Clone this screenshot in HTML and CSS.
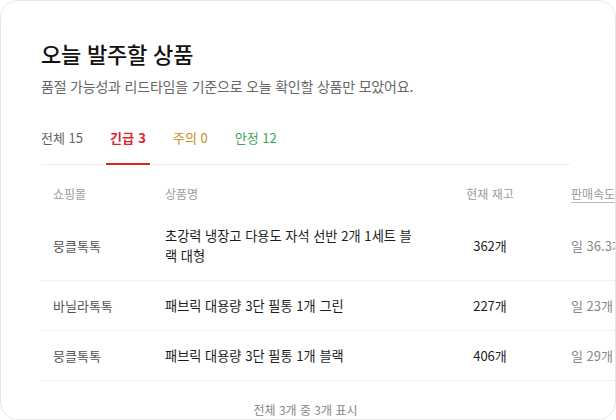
FILE: index.html
```html
<!DOCTYPE html>
<html lang="ko">
<head>
<meta charset="utf-8">
<title>오늘 발주할 상품</title>
<link rel="stylesheet" href="styles.css">
</head>
<body>
<section class="card">
  <h1 class="title">오늘 발주할 상품</h1>
  <p class="subtitle">품절 가능성과 리드타임을 기준으로 오늘 확인할 상품만 모았어요.</p>

  <nav class="tabs">
    <span class="tab tab-all">전체 15</span>
    <span class="tab tab-urgent is-active">긴급 3</span>
    <span class="tab tab-warn">주의 0</span>
    <span class="tab tab-safe">안정 12</span>
  </nav>

  <div class="table-wrap">
    <table class="orders">
      <colgroup>
        <col class="c-mall">
        <col class="c-name">
        <col class="c-stock">
        <col class="c-speed">
      </colgroup>
      <thead>
        <tr>
          <th>쇼핑몰</th>
          <th>상품명</th>
          <th class="stock">현재 재고</th>
          <th><span class="hint">판매속도</span></th>
        </tr>
      </thead>
      <tbody>
        <tr>
          <td class="mall">뭉클톡톡</td>
          <td class="name"><div class="name-text">초강력 냉장고 다용도 자석 선반 2개 1세트 블랙 대형</div></td>
          <td class="stock">362개</td>
          <td class="speed">일 36.3개</td>
        </tr>
        <tr>
          <td class="mall">바닐라톡톡</td>
          <td class="name"><div class="name-text">패브릭 대용량 3단 필통 1개 그린</div></td>
          <td class="stock">227개</td>
          <td class="speed">일 23개</td>
        </tr>
        <tr>
          <td class="mall">뭉클톡톡</td>
          <td class="name"><div class="name-text">패브릭 대용량 3단 필통 1개 블랙</div></td>
          <td class="stock">406개</td>
          <td class="speed">일 29개</td>
        </tr>
      </tbody>
    </table>
  </div>

  <p class="footer">전체 3개 중 3개 표시</p>
</section>
</body>
</html>
```

FILE: styles.css
```css
* {
  box-sizing: border-box;
}

html,
body {
  margin: 0;
  background: #ffffff;
}

body {
  font-family: "Noto Sans CJK KR", "Noto Sans", sans-serif;
  color: #222222;
}

.card {
  width: 616px;
  height: 420px;
  border: 1px solid #e6e6e6;
  border-radius: 18px;
  padding: 38px 45px 0 40px;
  overflow: hidden;
  background: #ffffff;
}

.title {
  margin: 0;
  font-size: 22px;
  line-height: 28px;
  font-weight: 500;
  letter-spacing: -0.2px;
  color: #111111;
}

.subtitle {
  margin: 9px 0 0;
  font-size: 14px;
  line-height: 20px;
  letter-spacing: -0.2px;
  color: #666666;
}

/* status tabs */
.tabs {
  display: flex;
  gap: 27px;
  margin-top: 32px;
  border-bottom: 1px solid #eeeeee;
}

.tab {
  position: relative;
  padding-bottom: 16px;
  font-size: 13px;
  line-height: 20px;
}

.tab-all {
  color: #666666;
}

.tab-urgent {
  color: #d9262b;
  font-weight: 700;
  letter-spacing: 0.2px;
}

.tab-warn {
  color: #c98b22;
}

.tab-safe {
  color: #3aa755;
}

.tab.is-active::after {
  content: "";
  position: absolute;
  left: -4px;
  right: -4px;
  bottom: -1px;
  height: 2px;
  background: #d9262b;
}

.table-wrap {
  margin-top: 12px;
  margin-right: -45px;
  overflow: hidden;
}

.orders {
  width: 668px;
  border-collapse: collapse;
  table-layout: fixed;
}

.c-mall {
  width: 112px;
}

.c-name {
  width: 300px;
}

.c-stock {
  width: 106px;
}

.c-speed {
  width: 150px;
}

.orders th {
  padding: 7px 12px;
  font-size: 12px;
  line-height: 20px;
  font-weight: 400;
  color: #9a9a9a;
  text-align: left;
  white-space: nowrap;
}

.orders td {
  padding: 15px 12px 14px;
  font-size: 13px;
  line-height: 20px;
  border-bottom: 1px solid #f0f0f0;
  vertical-align: middle;
}

.orders .stock {
  text-align: center;
  padding-right: 44px;
  white-space: nowrap;
}

.hint {
  text-decoration: underline;
  text-decoration-color: #bbbbbb;
  text-underline-offset: 3px;
}

.mall {
  font-size: 12.5px;
  color: #555555;
  white-space: nowrap;
}

.name-text {
  width: 252px;
  font-size: 13.2px;
  word-break: break-all;
  color: #1c1c1c;
}

.stock {
  color: #222222;
}

.speed {
  color: #888888;
  white-space: nowrap;
}

.footer {
  margin: 0;
  padding-top: 20px;
  font-size: 12px;
  line-height: 18px;
  color: #888888;
  text-align: center;
}
```
